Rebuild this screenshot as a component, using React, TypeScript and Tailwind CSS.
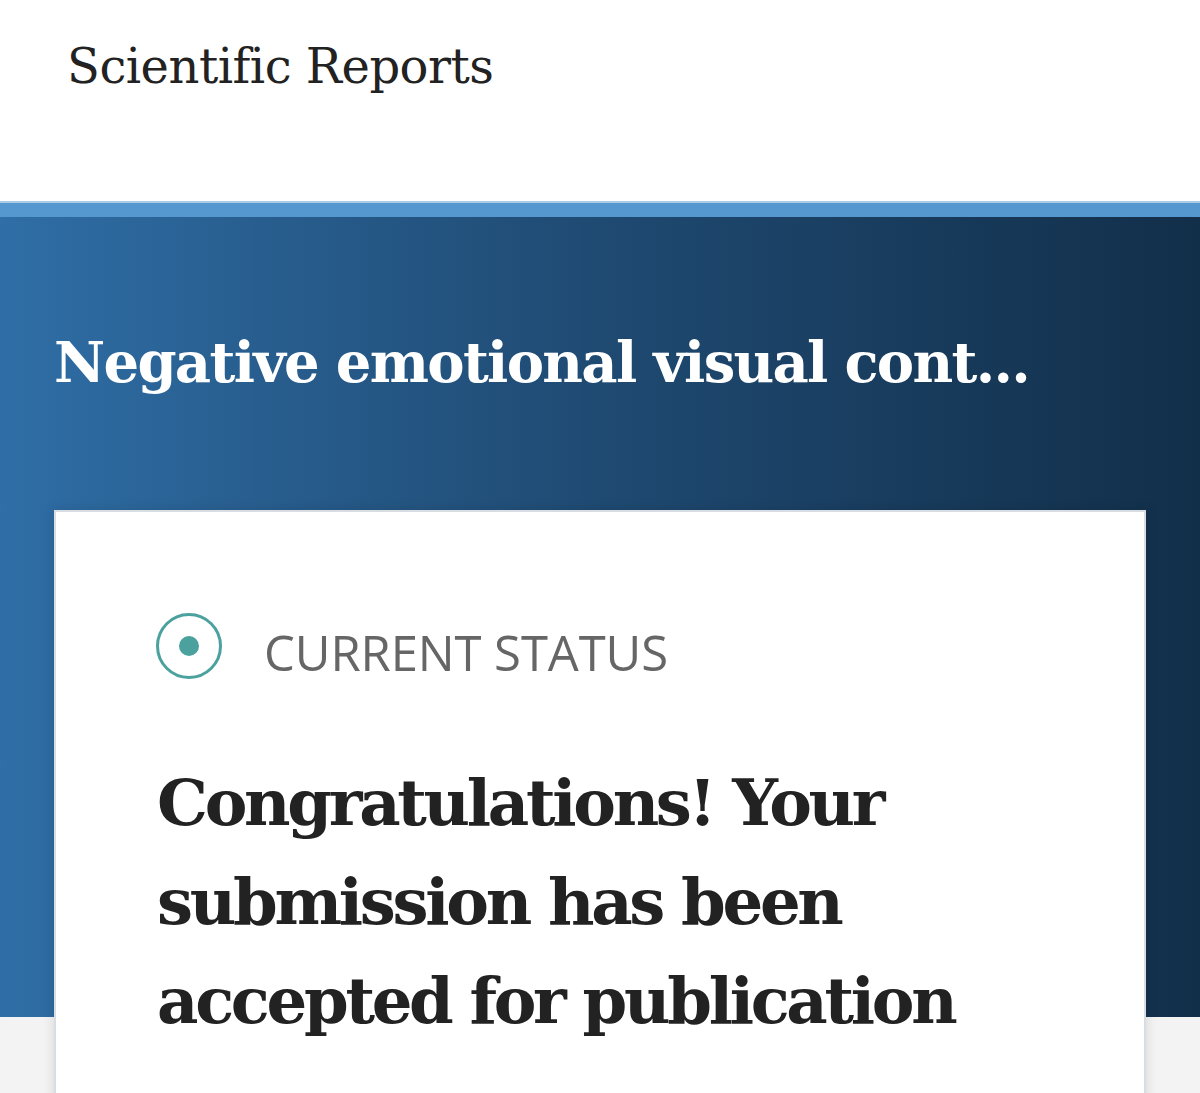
export default function App() {
  return (
    <div className="w-[1200px] h-[1093px] overflow-hidden bg-[#f3f3f3] relative">
      <div className="h-[201px] bg-white flex items-start">
        <div className="pl-[67px] pt-[34px] text-[48px] leading-[64px] text-[#222] tracking-[-0.5px]" style={{ fontFamily: '"DejaVu Serif", serif' }}>
          Scientific Reports
        </div>
      </div>
      <div className="h-[2px] bg-[#a9cde6]" />
      <div className="h-[14px] bg-[#5597cf]" />
      <div className="h-[800px] bg-gradient-to-r from-[#2f6ea6] via-[#1f4a72] to-[#122f4a] px-[54px] pt-[105px]">
        <div className="text-white font-bold text-[56px] leading-[80px] whitespace-nowrap tracking-[-1.7px]" style={{ fontFamily: '"DejaVu Serif", serif' }}>
          Negative emotional visual cont...
        </div>
        <div className="mt-[108px] relative z-10 bg-white border-2 border-[#d8dde3] shadow-[0_0_12px_rgba(0,0,0,0.12)] h-[700px] px-[101px] pt-[100px]">
          <div className="flex items-start gap-[42px]">
            <svg width="66" height="66" viewBox="0 0 66 66" className="mt-[1px] -ml-[1px]">
              <circle cx="33" cy="33" r="31.5" fill="none" stroke="#4aa19d" strokeWidth="3" />
              <circle cx="33" cy="33" r="10" fill="#4aa19d" />
            </svg>
            <div className="text-[49px] leading-[60px] mt-[10px] text-[#666] tracking-[-0.1px]" style={{ fontFamily: '"Open Sans", sans-serif' }}>
              CURRENT STATUS
            </div>
          </div>
          <div className="mt-[71px] text-[#222] font-bold text-[64px] leading-[99px] w-[880px] tracking-[-3.3px]" style={{ fontFamily: '"DejaVu Serif", serif' }}>
            Congratulations! Your submission has been accepted for publication
          </div>
        </div>
      </div>
    </div>
  );
}
